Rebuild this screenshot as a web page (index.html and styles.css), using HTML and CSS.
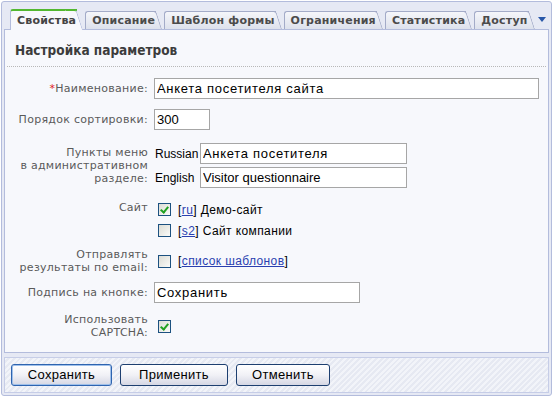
FILE: index.html
```html
<!DOCTYPE html>
<html lang="ru">
<head>
<meta charset="utf-8">
<title>Настройка параметров</title>
<link rel="stylesheet" href="styles.css">
</head>
<body>
<div class="frame">
  <div class="tabs">
    <div class="tab active">Свойства</div>
    <div class="tab">Описание</div>
    <div class="tab">Шаблон формы</div>
    <div class="tab">Ограничения</div>
    <div class="tab">Статистика</div>
    <div class="tab">Доступ</div>
    <div class="tab-more"></div>
  </div>
  <div class="panel">
    <div class="title">Настройка параметров</div>
    <div class="form">
      <div class="row r1">
        <div class="label"><span class="req">*</span>Наименование:</div>
        <div class="field"><input class="text cyr w-name" type="text" value="Анкета посетителя сайта"></div>
      </div>
      <div class="row r2">
        <div class="label">Порядок сортировки:</div>
        <div class="field"><input class="text w-sort" type="text" value="300"></div>
      </div>
      <div class="row r3">
        <div class="label">Пункты меню<br>в административном<br>разделе:</div>
        <div class="field langs">
          <span class="lang">Russian</span><input class="text cyr w-lang" type="text" value="Анкета посетителя">
          <span class="lang">English</span><input class="text w-lang" type="text" value="Visitor questionnaire">
        </div>
      </div>
      <div class="row r4">
        <div class="label top">Сайт</div>
        <div class="field sites">
          <div class="site"><span class="cb checked"></span><span class="txt">[<a href="#">ru</a>] Демо-сайт</span></div>
          <div class="site"><span class="cb"></span><span class="txt">[<a href="#">s2</a>] Сайт компании</span></div>
        </div>
      </div>
      <div class="row r5">
        <div class="label">Отправлять<br>результаты по email:</div>
        <div class="field site"><span class="cb"></span><span class="txt">[<a href="#">список шаблонов</a>]</span></div>
      </div>
      <div class="row r6">
        <div class="label">Подпись на кнопке:</div>
        <div class="field"><input class="text cyr w-btn" type="text" value="Сохранить"></div>
      </div>
      <div class="row r7">
        <div class="label">Использовать<br>CAPTCHA:</div>
        <div class="field site"><span class="cb checked"></span></div>
      </div>
    </div>
  </div>
  <div class="buttons">
    <button class="btn default">Сохранить</button>
    <button class="btn">Применить</button>
    <button class="btn">Отменить</button>
  </div>
</div>
</body>
</html>
```
FILE: styles.css
```css
html, body { margin: 0; padding: 0; }
body {
  width: 553px;
  height: 397px;
  background: #ffffff;
  font-family: "DejaVu Sans", Verdana, sans-serif;
  overflow: hidden;
}
.frame {
  box-sizing: border-box;
  margin: 1px;
  width: 551px;
  height: 395px;
  border: 1px solid #b3bcdc;
  border-radius: 3px;
  background: #e6e9f4;
  padding: 0 2px 2px 2px;
  display: flex;
  flex-direction: column;
}
.tabs {
  height: 27px;
  display: flex;
  align-items: flex-end;
  padding-left: 6px;
  position: relative;
  z-index: 2;
}
.tab {
  position: relative;
  z-index: 0;
  box-sizing: border-box;
  height: 18px;
  margin-right: 8px;
  padding: 0 1px 0 6px;
  border-left: 1px solid #a3abc8;
  border-top: 1px solid #a3abc8;
  border-top-left-radius: 3px;
  background: linear-gradient(#f5f6fa, #dde1ec);
  font-weight: bold;
  font-size: 11px;
  letter-spacing: 0.2px;
  line-height: 17px;
  color: #4b4b4b;
  white-space: nowrap;
}
.tab::after {
  content: "";
  position: absolute;
  z-index: -1;
  top: -1px;
  bottom: 0;
  right: -6px;
  width: 10px;
  background: inherit;
  border-top: 1px solid #a3abc8;
  border-right: 1px solid #a3abc8;
  border-top-right-radius: 3px;
  transform: skewX(18deg);
  transform-origin: bottom left;
}
.tab.active {
  height: 21px;
  margin-bottom: -1px;
  border-top: 2px solid #52b830;
  border-left-color: #b3bcdc;
  background: #f7f8fc;
  line-height: 19px;
  color: #444;
}
.tab.active::after {
  top: -2px;
  border-top: 2px solid #52b830;
  border-right-color: #b3bcdc;
}
.tab-more {
  width: 0;
  height: 0;
  margin: 0 0 7px 1px;
  border-left: 4px solid transparent;
  border-right: 4px solid transparent;
  border-top: 5px solid #2857a8;
  align-self: flex-end;
}
.panel {
  box-sizing: border-box;
  height: 324px;
  border: 1px solid #b3bcdc;
  background: #f7f8fc;
  position: relative;
  z-index: 1;
}
.title {
  margin: 12px 2px 0 2px;
  padding: 0 0 7px 8px;
  border-bottom: 1px dotted #b8b8b8;
  font-family: "DejaVu Sans Condensed", "DejaVu Sans", sans-serif;
  font-weight: bold;
  font-size: 13.5px;
  line-height: 17px;
  color: #3c3c3c;
}
.form {
  padding-top: 11px;
}
.row {
  display: grid;
  grid-template-columns: 143px 1fr;
  column-gap: 6px;
  align-items: center;
}
.r1 { height: 21px; }
.r2 { height: 21px; margin-top: 10px; }
.r3 { height: 45px; margin-top: 13px; }
.r4 { height: 42px; margin-top: 11px; align-items: start; }
.r5 { height: 26px; margin-top: 7px; }
.r6 { height: 21px; margin-top: 8px; }
.r7 { height: 26px; margin-top: 10px; }
.label {
  text-align: right;
  font-size: 11px;
  letter-spacing: 0.28px;
  line-height: 13px;
  color: #5a5a5a;
}
.label.top { line-height: 17px; }
.req { color: #e01e1e; }
.field { display: flex; align-items: center; }
.text {
  box-sizing: border-box;
  height: 21px;
  margin: 0;
  padding: 0 2px;
  border: 1px solid #a6a6a6;
  background: #ffffff;
  font-family: "Liberation Sans", Arial, sans-serif;
  font-size: 13px;
  color: #000;
  outline: none;
}
.text.cyr { letter-spacing: 0.7px; }
.w-name { width: 385px; }
.w-sort { width: 56px; }
.w-lang { width: 207px; }
.w-btn { width: 206px; }
.langs {
  display: grid;
  grid-template-columns: 46px 207px;
  row-gap: 3px;
  align-items: center;
}
.lang {
  font-family: "Liberation Sans", Arial, sans-serif;
  font-size: 12px;
  color: #000;
  padding-left: 1px;
}
.sites { display: flex; flex-direction: column; align-items: stretch; }
.site {
  display: flex;
  align-items: center;
  height: 21px;
}
.cb {
  box-sizing: border-box;
  width: 13px;
  height: 13px;
  margin-left: 4px;
  border: 1px solid #1c5180;
  background: linear-gradient(135deg, #dcdcd5, #fbfbf8);
  position: relative;
  flex: none;
}
.cb.checked::after {
  content: "";
  position: absolute;
  left: 3px;
  top: 1px;
  width: 3px;
  height: 6px;
  border-right: 2px solid #21a121;
  border-bottom: 2px solid #21a121;
  transform: rotate(40deg);
}
.txt {
  margin-left: 7px;
  font-family: "Liberation Sans", Arial, sans-serif;
  font-size: 12px;
  letter-spacing: 0.4px;
  color: #000;
}
.txt a { color: #2a3fb0; text-decoration: underline; }
.buttons {
  box-sizing: border-box;
  height: 36px;
  margin-top: 4px;
  border: 1px solid #c6cde7;
  background: repeating-linear-gradient(135deg, #f2f4f9 0 2px, #e6e9f2 2px 4px);
  display: flex;
  align-items: center;
  gap: 8px;
  padding-left: 6px;
}
.btn {
  box-sizing: border-box;
  height: 22px;
  margin: 0;
  padding: 0;
  border: 1px solid #1d3f70;
  border-radius: 3px;
  background: linear-gradient(#ffffff, #f1f1f6 50%, #d5d7e4);
  font-family: "Liberation Sans", Arial, sans-serif;
  font-size: 13px;
  letter-spacing: 0.3px;
  color: #000;
  line-height: 20px;
}
.btn.default {
  border-color: #2e64b0;
  box-shadow: inset 0 0 0 1px #9fc0ea;
  width: 101px;
}
.btn:nth-child(2) { width: 108px; }
.btn:nth-child(3) { width: 94px; }
```
